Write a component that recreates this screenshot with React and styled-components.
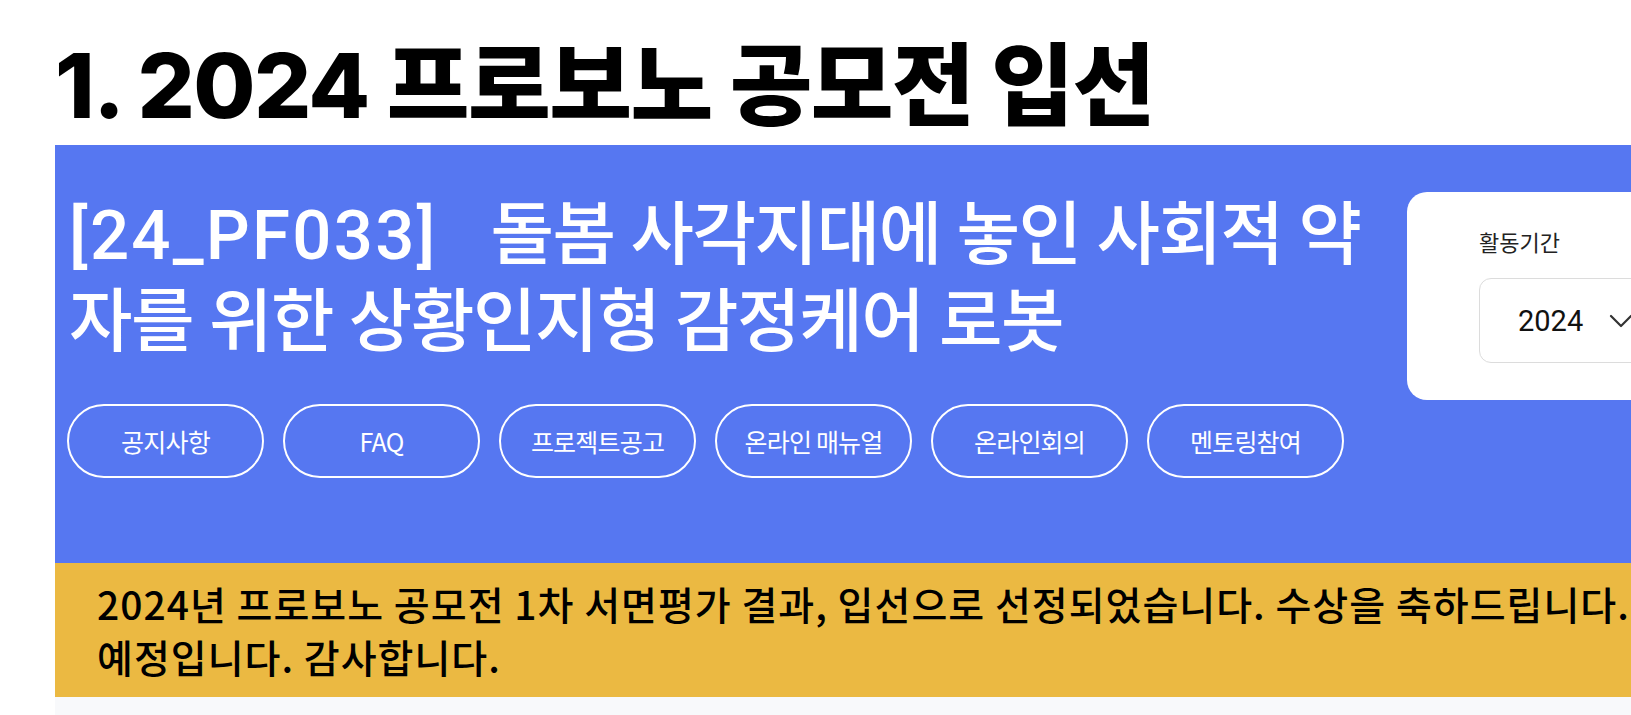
import React from "react";
import styled, { createGlobalStyle } from "styled-components";

const blue = "#5677f1";
const yellow = "#ebb942";

const GlobalStyle = createGlobalStyle`
  html, body {
    margin: 0;
    padding: 0;
    overflow: hidden;
    background: #ffffff;
    font-family: Inter, "Noto Sans CJK KR", sans-serif;
  }
`;

const Page = styled.div`
  width: 1900px;
  padding-left: 55px;
`;

const Heading = styled.h1`
  margin: 0;
  padding-top: 26px;
  font-size: 90px;
  line-height: 119px;
  font-weight: 800;
  color: #000;
  letter-spacing: -1.6px;
`;

const Hero = styled.section`
  background: ${blue};
  display: flex;
  align-items: flex-start;
  padding: 47px 12px 85px;
`;

const Main = styled.div`
  width: 1320px;
  flex-shrink: 0;
`;

const Title = styled.h2`
  margin: 0 0 38px;
  padding-left: 2px;
  font-family: Roboto, "Noto Sans CJK KR", sans-serif;
  font-size: 69px;
  line-height: 87px;
  font-weight: 500;
  color: #ffffff;
  letter-spacing: -1.4px;
`;

const Code = styled.span`
  letter-spacing: 2.2px;
  margin-right: 53px;
`;

const Menu = styled.nav`
  display: flex;
  gap: 19px;
`;

const MenuButton = styled.button`
  width: 197px;
  height: 74px;
  border: 2px solid #ffffff;
  border-radius: 37px;
  background: transparent;
  color: #ffffff;
  font-family: "Noto Sans CJK KR", sans-serif;
  font-size: 25px;
  font-weight: 400;
  letter-spacing: -0.8px;
  cursor: pointer;
`;

const Card = styled.aside`
  margin-left: 20px;
  width: 420px;
  background: #ffffff;
  border-radius: 20px;
  padding: 31px 0 37px 72px;
`;

const Label = styled.div`
  font-family: "Noto Sans CJK KR", sans-serif;
  font-size: 22px;
  line-height: 36px;
  color: #222;
  margin-bottom: 19px;
`;

const Select = styled.div`
  display: flex;
  align-items: center;
  gap: 26px;
  height: 85px;
  box-sizing: border-box;
  border: 1px solid #dcdcdc;
  border-radius: 12px;
  padding-left: 38px;
  font-family: Roboto, "Noto Sans CJK KR", sans-serif;
  font-size: 29px;
  color: #111;
`;

const Notice = styled.div`
  background: ${yellow};
  padding: 14px 42px 14px;
  font-family: "Noto Sans CJK KR", sans-serif;
  font-size: 39px;
  line-height: 53px;
  font-weight: 500;
  color: #000;
  white-space: nowrap;
  letter-spacing: 1px;
`;

const Strip = styled.div`
  height: 60px;
  background: #f8f9fb;
`;

const Chevron = () => (
  <svg width="24" height="14" viewBox="0 0 24 14" fill="none">
    <path d="M2 2l10 10 10-10" stroke="#333" strokeWidth="2.2" strokeLinecap="round" strokeLinejoin="round" />
  </svg>
);

const menus = ["공지사항", "FAQ", "프로젝트공고", "온라인 매뉴얼", "온라인회의", "멘토링참여"];

export default function App() {
  return (
    <>
      <GlobalStyle />
      <Page>
        <Heading>1. 2024 프로보노 공모전 입선</Heading>
        <Hero>
          <Main>
            <Title>
              <Code>[24_PF033]</Code>
              돌봄 사각지대에 놓인 사회적 약자를 위한 상황인지형 감정케어 로봇
            </Title>
            <Menu>
              {menus.map((m) => (
                <MenuButton key={m}>{m}</MenuButton>
              ))}
            </Menu>
          </Main>
          <Card>
            <Label>활동기간</Label>
            <Select>
              2024
              <Chevron />
            </Select>
          </Card>
        </Hero>
        <Notice>
          2024년 프로보노 공모전 1차 서면평가 결과, 입선으로 선정되었습니다. 수상을 축하드립니다. 시상 관련 일정은 추후 안내
          <br />
          예정입니다. 감사합니다.
        </Notice>
        <Strip />
      </Page>
    </>
  );
}
